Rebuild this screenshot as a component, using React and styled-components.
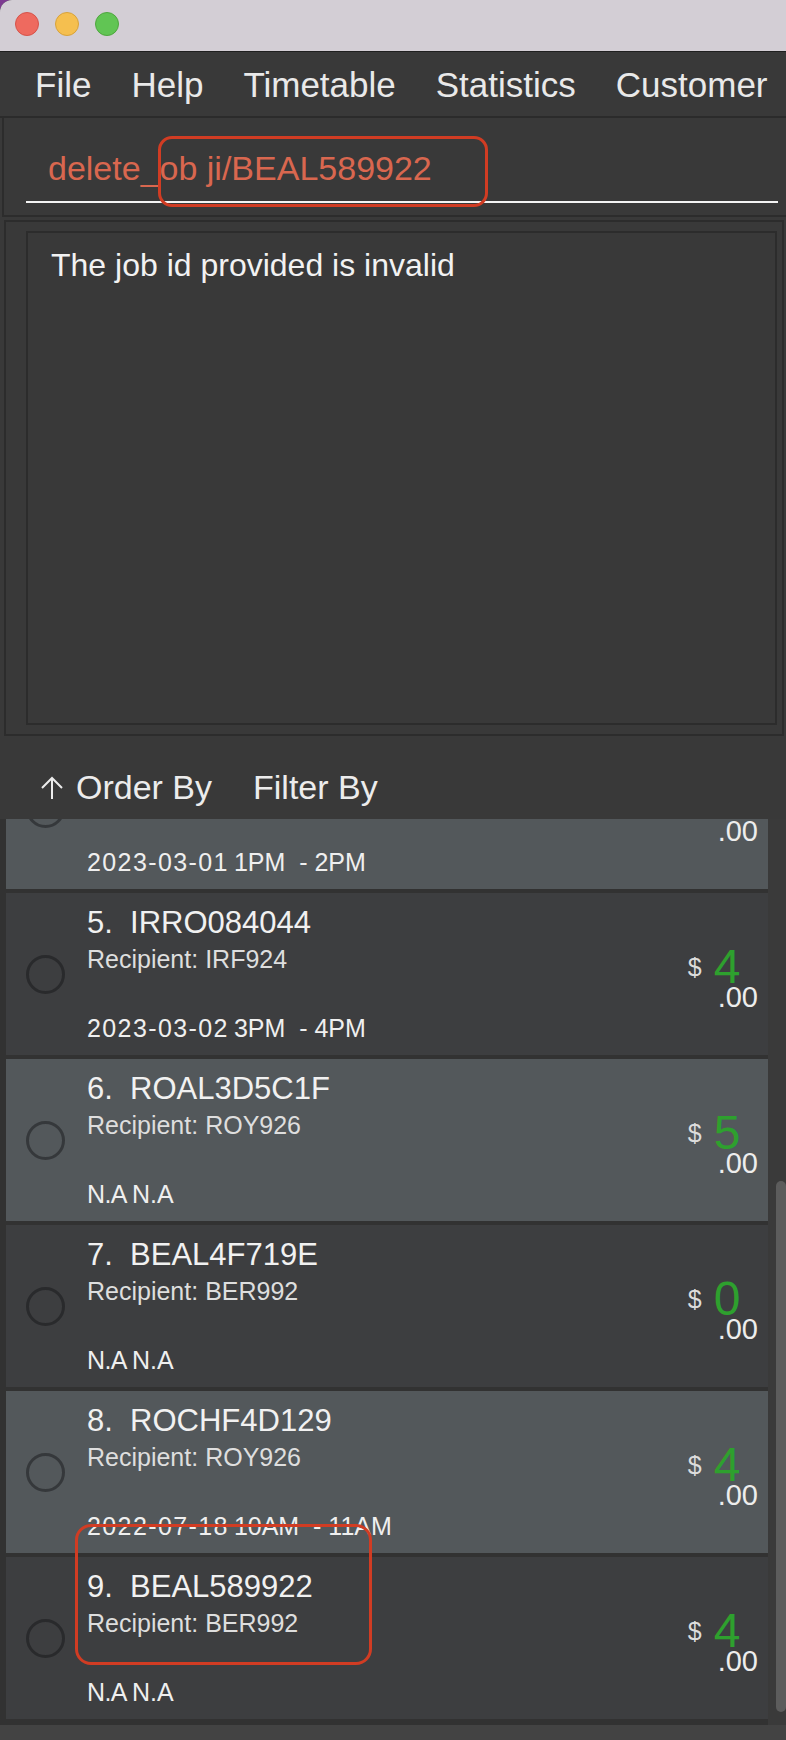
import React from "react";
import styled, { createGlobalStyle } from "styled-components";

const GlobalStyle = createGlobalStyle`
  html, body {
    margin: 0;
    padding: 0;
    background: #7d3b91;
  }
  body {
    font-family: "Liberation Sans", Arial, sans-serif;
  }
`;

const jobs = [
  { n: 4, id: "ROAL8E2B1A", recipient: "ROY926", price: "5", date: "2023-03-01", time: "1PM  - 2PM" },
  { n: 5, id: "IRRO084044", recipient: "IRF924", price: "4", date: "2023-03-02", time: "3PM  - 4PM" },
  { n: 6, id: "ROAL3D5C1F", recipient: "ROY926", price: "5", date: "N.A", time: "N.A" },
  { n: 7, id: "BEAL4F719E", recipient: "BER992", price: "0", date: "N.A", time: "N.A" },
  { n: 8, id: "ROCHF4D129", recipient: "ROY926", price: "4", date: "2022-07-18", time: "10AM  - 11AM" },
  { n: 9, id: "BEAL589922", recipient: "BER992", price: "4", date: "N.A", time: "N.A" },
];

const Window = styled.div`
  position: relative;
  width: 786px;
  height: 1740px;
  overflow: hidden;
  display: flex;
  flex-direction: column;
  background: #393939;
  border-top-left-radius: 12px;
  color: #ececec;
`;

const TitleBar = styled.div`
  height: 52px;
  flex-shrink: 0;
  display: flex;
  align-items: center;
  gap: 16px;
  padding: 0 0 4px 15px;
  box-sizing: border-box;
  background: #d3ced5;
  border-bottom: 1px solid #1f1f1f;
`;

const Light = styled.span`
  width: 24px;
  height: 24px;
  box-sizing: border-box;
  border-radius: 50%;
  background: ${(p) => p.$fill};
  border: 1px solid ${(p) => p.$edge};
`;

const MenuBar = styled.div`
  height: 66px;
  flex-shrink: 0;
  box-sizing: border-box;
  display: flex;
  align-items: center;
  gap: 40px;
  padding-left: 35px;
  border-bottom: 2px solid #2b2b2b;
`;

const MenuItem = styled.span`
  font-size: 35px;
  line-height: 1;
  color: #e9e9e9;
  white-space: nowrap;
`;

const CommandPanel = styled.div`
  height: 99px;
  flex-shrink: 0;
  box-sizing: border-box;
  margin-left: 2px;
  padding: 31px 8px 12px 22px;
  border-left: 2px solid #2c2c2c;
  border-bottom: 2px solid #2c2c2c;
`;

const CommandText = styled.div`
  font-size: 34px;
  line-height: 38px;
  color: #d9674f;
  white-space: pre;
  padding: 0 0 14px 22px;
  border-bottom: 2px solid #f4f4f4;
`;

const ResultPanel = styled.div`
  height: 516px;
  flex-shrink: 0;
  box-sizing: border-box;
  display: flex;
  margin: 3px 2px 0 4px;
  padding: 9px 5px 9px 20px;
  border: 2px solid #2c2c2c;
`;

const ResultBox = styled.div`
  flex: 1;
  border: 2px solid #2c2c2c;
  padding: 14px 23px;
  font-size: 32px;
  line-height: 37px;
  color: #f2f2f2;
`;

const Toolbar = styled.div`
  height: 83px;
  flex-shrink: 0;
  box-sizing: border-box;
  display: flex;
  align-items: flex-start;
  gap: 41px;
  padding: 32px 0 0 40px;
`;

const ToolButton = styled.span`
  display: flex;
  align-items: center;
  gap: 12px;
  font-size: 34px;
  line-height: 39px;
  color: #ececec;
`;

const ListArea = styled.div`
  height: 906px;
  flex-shrink: 0;
  display: flex;
  background: #323232;
`;

const Viewport = styled.div`
  flex: 1;
  overflow: hidden;
  padding-left: 6px;
`;

const RowStack = styled.div`
  display: flex;
  flex-direction: column;
  gap: 4px;
  margin-top: -92px;
`;

const Row = styled.div`
  height: 162px;
  flex-shrink: 0;
  box-sizing: border-box;
  display: flex;
  align-items: center;
  padding: 0 10px 0 20px;
  background: ${(p) => (p.$light ? "#53585b" : "#3d3e40")};
`;

const Radio = styled.span`
  width: 39px;
  height: 39px;
  flex-shrink: 0;
  box-sizing: border-box;
  border-radius: 50%;
  border: 3px solid rgba(18, 18, 20, 0.45);
`;

const Details = styled.div`
  flex: 1;
  align-self: stretch;
  display: flex;
  flex-direction: column;
  margin-left: 22px;
  padding: 12px 0;
`;

const Title = styled.div`
  font-size: 31px;
  line-height: 36px;
  color: #f1f1f1;
  white-space: pre;
`;

const Recipient = styled.div`
  margin-top: 4px;
  font-size: 25px;
  line-height: 29px;
  color: #dedede;
`;

const When = styled.div`
  margin-top: auto;
  display: flex;
  gap: 5px;
  font-size: 25px;
  line-height: 29px;
  color: #efefef;
  white-space: pre;
`;

const DateText = styled.span`
  letter-spacing: ${(p) => (p.$na ? "-0.6px" : "1.4px")};
`;

const Price = styled.div`
  display: flex;
  align-items: flex-start;
  margin-top: 6px;
`;

const Dollar = styled.span`
  margin: 12px 12px 0 0;
  font-size: 25px;
  line-height: 25px;
  color: #dcdcdc;
`;

const Amount = styled.div`
  display: flex;
  flex-direction: column;
`;

const Whole = styled.span`
  font-size: 48px;
  line-height: 48px;
  color: #2ea02e;
`;

const Cents = styled.span`
  margin-top: -8px;
  padding-left: 4px;
  font-size: 29px;
  line-height: 28px;
  color: #ededed;
`;

const ScrollTrack = styled.div`
  width: 18px;
  flex-shrink: 0;
  box-sizing: border-box;
  padding-left: 8px;
  background: #3a3a3a;
`;

const Thumb = styled.div`
  width: 10px;
  height: 531px;
  margin-top: 362px;
  border-radius: 5px;
  background: #5c5c5c;
`;

const BottomBar = styled.div`
  flex: 1;
  background: #434343;
`;

const Mark = styled.div`
  position: absolute;
  top: ${(p) => p.$top}px;
  left: ${(p) => p.$left}px;
  width: ${(p) => p.$width}px;
  height: ${(p) => p.$height}px;
  box-sizing: border-box;
  border: 3px solid #d13c23;
  border-radius: ${(p) => p.$radius}px;
  pointer-events: none;
`;

const ArrowUp = () => (
  <svg width="24" height="24" viewBox="0 0 24 24" fill="none" stroke="#ececec" strokeWidth="2">
    <path d="M12 23V2M2 12L12 2L22 12" />
  </svg>
);

const JobRow = ({ job, light }) => (
  <Row $light={light}>
    <Radio />
    <Details>
      <Title>{`${job.n}.  ${job.id}`}</Title>
      <Recipient>Recipient: {job.recipient}</Recipient>
      <When>
        <DateText $na={job.date === "N.A"}>{job.date}</DateText>
        <span>{job.time}</span>
      </When>
    </Details>
    <Price>
      <Dollar>$</Dollar>
      <Amount>
        <Whole>{job.price}</Whole>
        <Cents>.00</Cents>
      </Amount>
    </Price>
  </Row>
);

export default function App() {
  return (
    <>
      <GlobalStyle />
      <Window>
        <TitleBar>
          <Light $fill="#ee6a5f" $edge="#d5534a" />
          <Light $fill="#f5bf4f" $edge="#d7a23b" />
          <Light $fill="#61c554" $edge="#4fa63f" />
        </TitleBar>
        <MenuBar>
          <MenuItem>File</MenuItem>
          <MenuItem>Help</MenuItem>
          <MenuItem>Timetable</MenuItem>
          <MenuItem>Statistics</MenuItem>
          <MenuItem>Customer</MenuItem>
        </MenuBar>
        <CommandPanel>
          <CommandText>delete_ob ji/BEAL589922</CommandText>
        </CommandPanel>
        <ResultPanel>
          <ResultBox>The job id provided is invalid</ResultBox>
        </ResultPanel>
        <Toolbar>
          <ToolButton>
            <ArrowUp />
            Order By
          </ToolButton>
          <ToolButton>Filter By</ToolButton>
        </Toolbar>
        <ListArea>
          <Viewport>
            <RowStack>
              {jobs.map((job, i) => (
                <JobRow key={job.n} job={job} light={i % 2 === 0} />
              ))}
            </RowStack>
          </Viewport>
          <ScrollTrack>
            <Thumb />
          </ScrollTrack>
        </ListArea>
        <BottomBar />
        <Mark $top={136} $left={158} $width={330} $height={71} $radius={14} />
        <Mark $top={1524} $left={75} $width={297} $height={141} $radius={16} />
      </Window>
    </>
  );
}
